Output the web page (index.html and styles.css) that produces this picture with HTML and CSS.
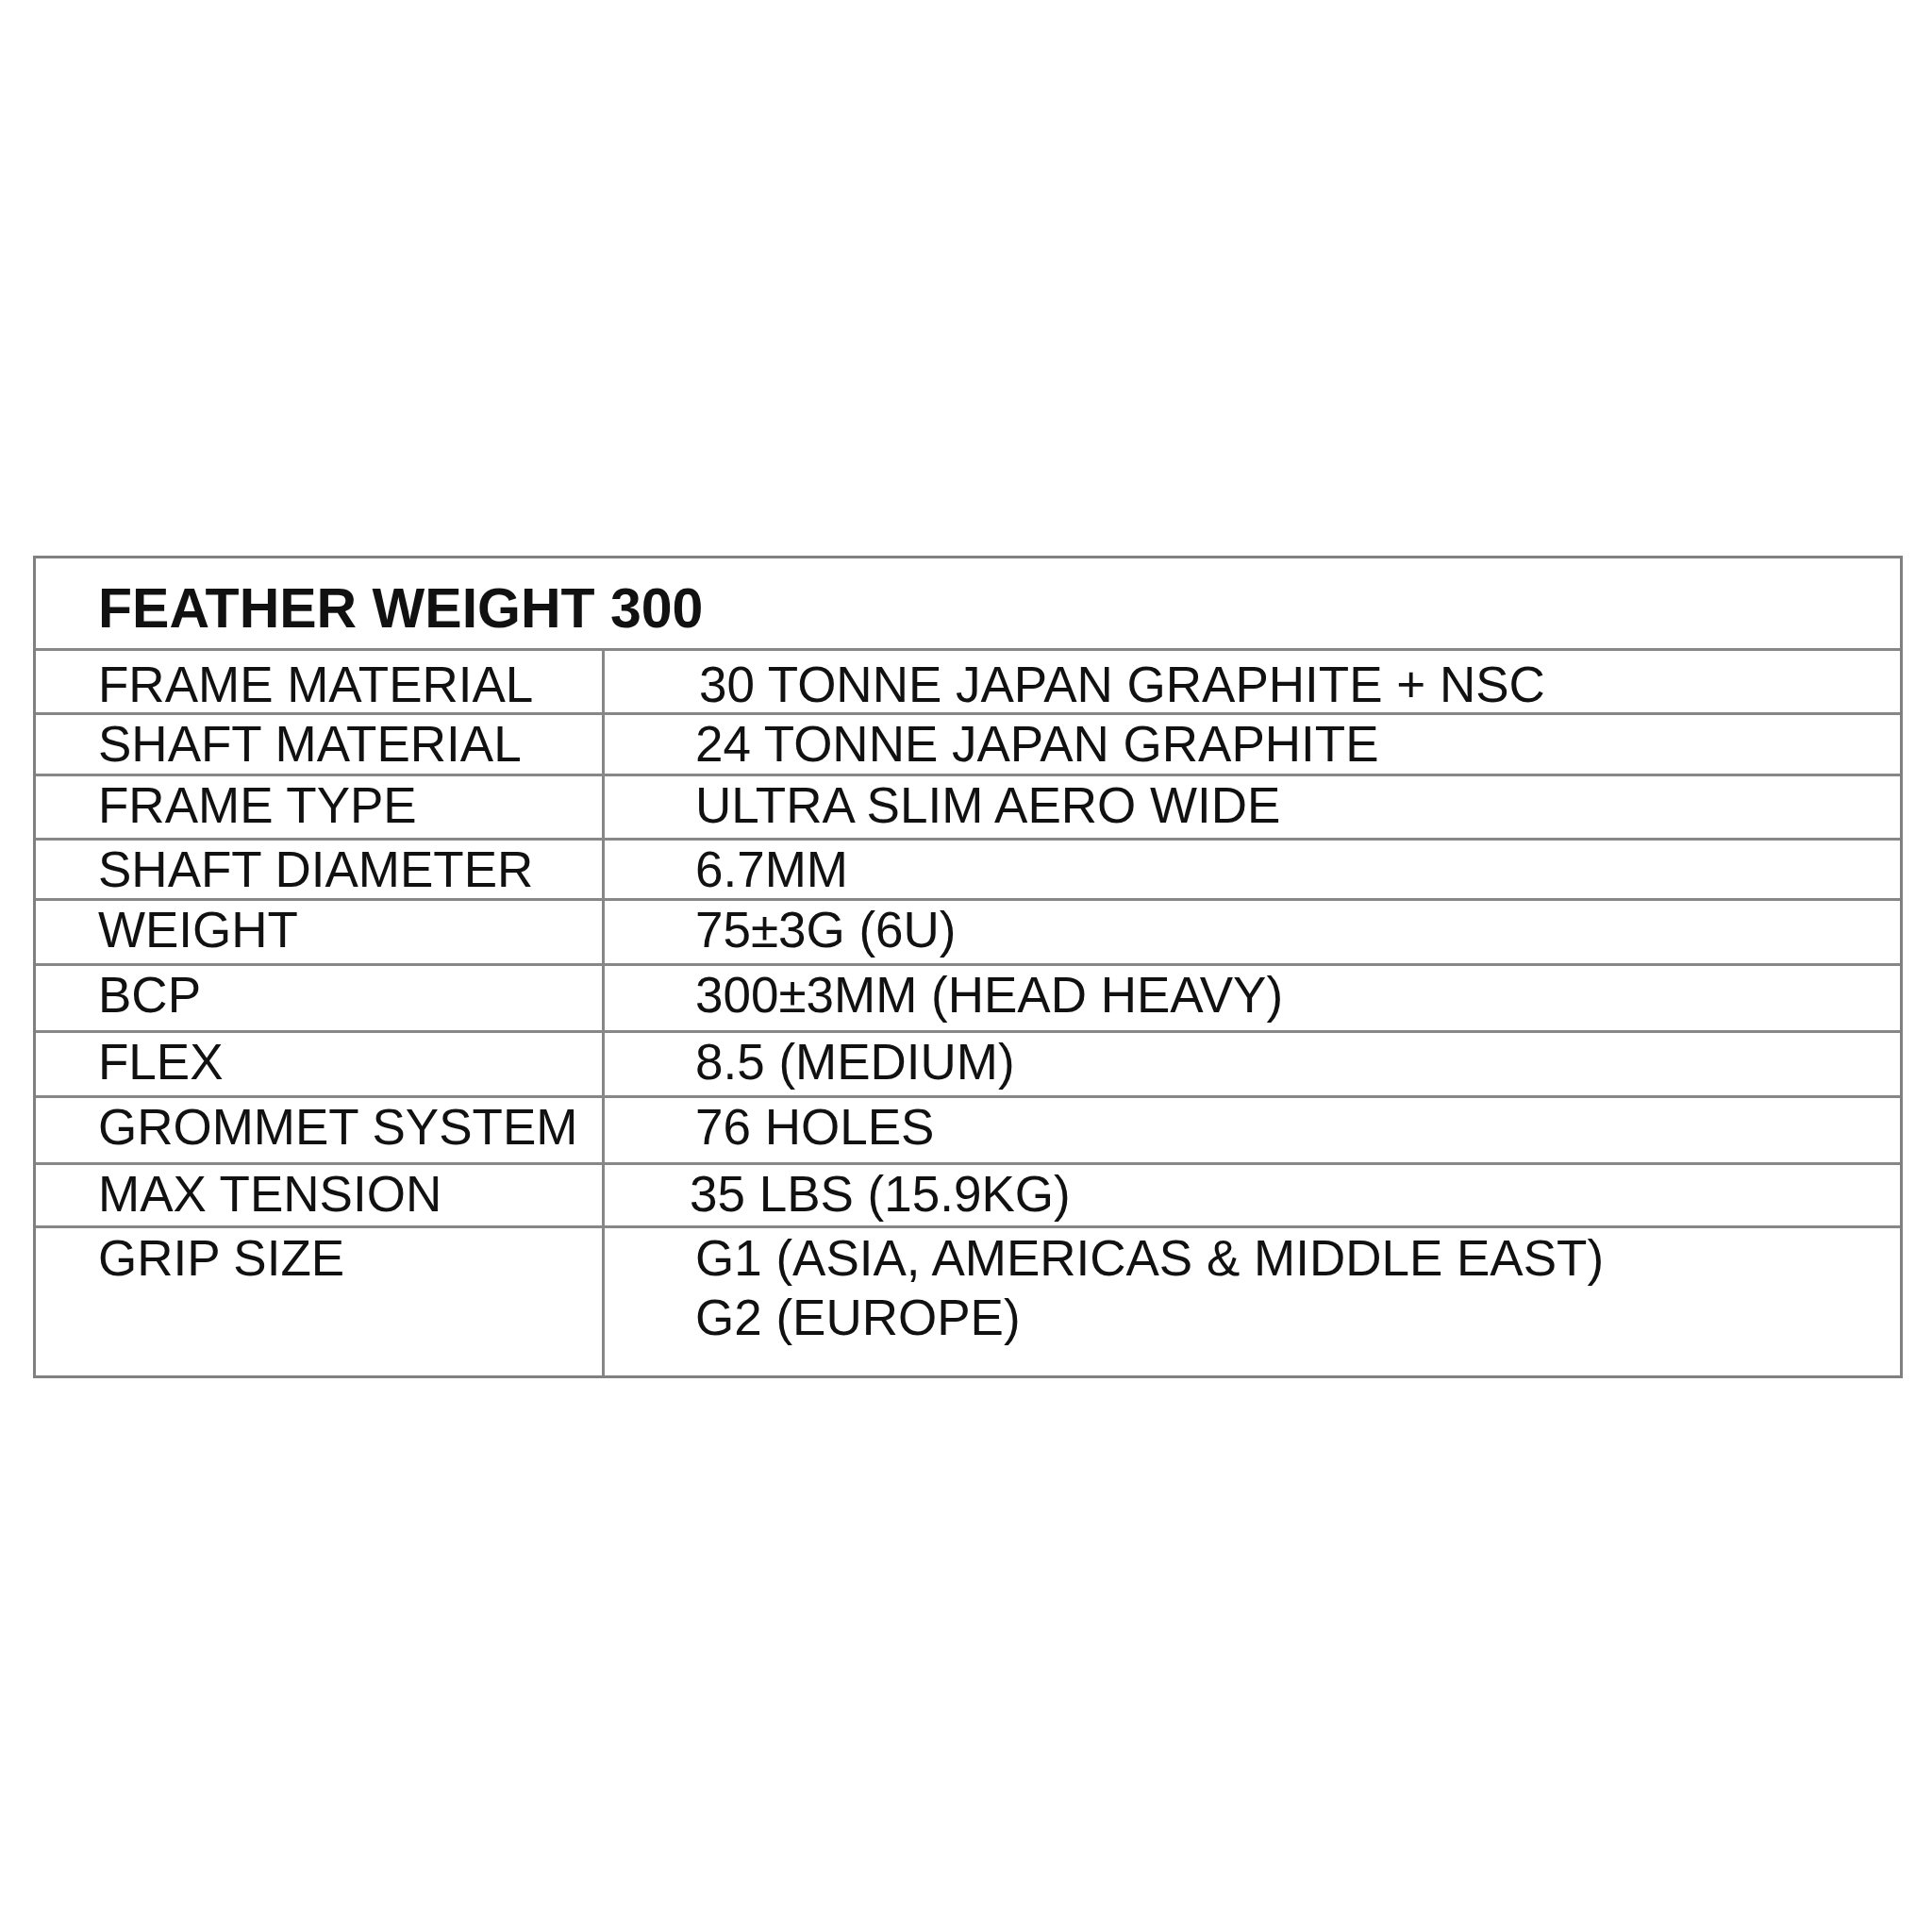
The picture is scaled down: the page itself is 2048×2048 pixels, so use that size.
FILE: index.html
```html
<!DOCTYPE html>
<html>
<head>
<meta charset="utf-8">
<link rel="stylesheet" href="styles.css">
</head>
<body>
<div class="page">
  <div class="spec">
    <div class="head">FEATHER WEIGHT 300</div>
    <div class="k first">FRAME MATERIAL</div><div class="v first nudge-r">30 TONNE JAPAN GRAPHITE + NSC</div>
    <div class="k">SHAFT MATERIAL</div><div class="v">24 TONNE JAPAN GRAPHITE</div>
    <div class="k">FRAME TYPE</div><div class="v">ULTRA SLIM AERO WIDE</div>
    <div class="k">SHAFT DIAMETER</div><div class="v">6.7MM</div>
    <div class="k">WEIGHT</div><div class="v">75±3G (6U)</div>
    <div class="k">BCP</div><div class="v">300±3MM (HEAD HEAVY)</div>
    <div class="k">FLEX</div><div class="v">8.5 (MEDIUM)</div>
    <div class="k">GROMMET SYSTEM</div><div class="v">76 HOLES</div>
    <div class="k">MAX TENSION</div><div class="v nudge-l">35 LBS (15.9KG)</div>
    <div class="k last">GRIP SIZE</div><div class="v last">G1 (ASIA, AMERICAS &amp; MIDDLE EAST)<br>G2 (EUROPE)</div>
  </div>
</div>
</body>
</html>
```
FILE: styles.css
```css
html, body {
  margin: 0;
  padding: 0;
  background: #ffffff;
}
.page {
  width: 2048px;
  height: 2048px;
  padding-top: 589px;
  padding-left: 35px;
  box-sizing: border-box;
}
.spec {
  width: 1982px;
  box-sizing: border-box;
  border: 3px solid #808080;
  display: grid;
  grid-template-columns: 600px 1fr;
  grid-template-rows: 95px 68px 65px 68px 64px 69px 71px 69px 71px 67px 159px;
  font-family: "Liberation Sans", Arial, sans-serif;
  color: #111111;
  filter: blur(0.7px);
}
.head {
  grid-column: 1 / -1;
  box-sizing: border-box;
  padding-top: 12px;
  padding-left: 66px;
  line-height: 83px;
  font-size: 59px;
  font-weight: bold;
}
.k, .v {
  box-sizing: border-box;
  border-top: 3px solid #878787;
  padding-top: 1px;
  line-height: 59px;
  font-size: 53px;
  white-space: nowrap;
}
.k.first, .v.first {
  padding-top: 6px;
}
.k {
  padding-left: 66px;
}
.v {
  border-left: 3px solid #878787;
  padding-left: 96px;
}
.v.nudge-r { padding-left: 100px; }
.v.nudge-l { padding-left: 90px; }
.k.last, .v.last {
  padding-top: 0;
  line-height: 63px;
}
```
